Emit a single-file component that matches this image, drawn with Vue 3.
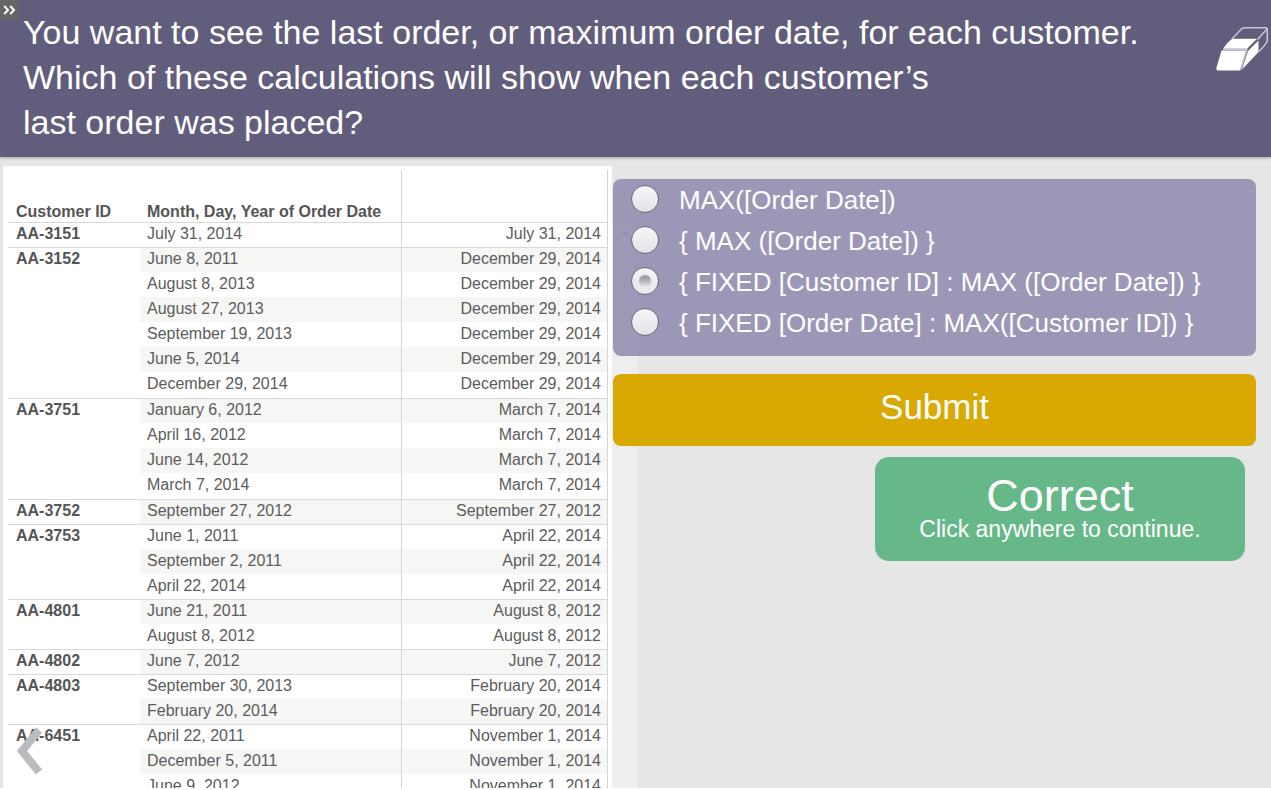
<script setup>
import { ref } from 'vue'

const groups = [
  { id: 'AA-3151', last: 'July 31, 2014', dates: ['July 31, 2014'] },
  {
    id: 'AA-3152',
    last: 'December 29, 2014',
    dates: ['June 8, 2011', 'August 8, 2013', 'August 27, 2013', 'September 19, 2013', 'June 5, 2014', 'December 29, 2014'],
  },
  { id: 'AA-3751', last: 'March 7, 2014', dates: ['January 6, 2012', 'April 16, 2012', 'June 14, 2012', 'March 7, 2014'] },
  { id: 'AA-3752', last: 'September 27, 2012', dates: ['September 27, 2012'] },
  { id: 'AA-3753', last: 'April 22, 2014', dates: ['June 1, 2011', 'September 2, 2011', 'April 22, 2014'] },
  { id: 'AA-4801', last: 'August 8, 2012', dates: ['June 21, 2011', 'August 8, 2012'] },
  { id: 'AA-4802', last: 'June 7, 2012', dates: ['June 7, 2012'] },
  { id: 'AA-4803', last: 'February 20, 2014', dates: ['September 30, 2013', 'February 20, 2014'] },
  { id: 'AA-6451', last: 'November 1, 2014', dates: ['April 22, 2011', 'December 5, 2011', 'June 9, 2012'] },
]

let count = 0
const rows = groups.flatMap((g) =>
  g.dates.map((date, i) => ({
    key: g.id + date,
    id: i === 0 ? g.id : '',
    date,
    last: g.last,
    band: count++ % 2 === 1,
    first: i === 0,
    tall: g.dates.length > 3 && i === g.dates.length - 1,
  }))
)

const options = [
  'MAX([Order Date])',
  '{ MAX ([Order Date]) }',
  '{ FIXED [Customer ID] : MAX ([Order Date]) }',
  '{ FIXED [Order Date] : MAX([Customer ID]) }',
]
const choice = ref(2)
</script>

<template>
  <div class="page">
    <header class="question">
      <button class="menu" type="button" aria-label="Open menu">
        <svg width="13" height="10" viewBox="0 0 13 10">
          <path d="M1.2 1 L5 5 L1.2 9 M7.2 1 L11 5 L7.2 9" />
        </svg>
      </button>
      <h1>
        You want to see the last order, or maximum order date, for each customer.<br />
        Which of these calculations will show when each customer’s<br />
        last order was placed?
      </h1>
      <button class="eraser" type="button" aria-label="Clear answer">
        <svg width="54" height="46" viewBox="0 0 54 46">
          <path class="solid" d="M17 12.800 H42 L32 22.800 H8 Q11.500 17 17 12.800 Z" />
          <path class="solid" d="M6.500 24.500 H31 L25 44.500 H3 Q1 44.500 1.500 41.500 Z" />
          <path class="solid" d="M33 25 L43.500 14.500 V26 L27 43.500 Z" />
          <path class="line" d="M17 13 L26.500 3 Q28 1.700 30 1.700 H50.500 Q52.500 1.700 52.300 4 V15 Q50.500 19 43.500 26 M42.500 13.500 L52 3 M8 23.500 H32 L25.500 44" />
        </svg>
      </button>
    </header>

    <main class="body">
      <section class="sheet">
        <table>
          <colgroup>
            <col class="c-id" />
            <col class="c-date" />
            <col class="c-last" />
          </colgroup>
          <thead>
            <tr>
              <th scope="col">Customer ID</th>
              <th scope="col">Month, Day, Year of Order Date</th>
              <td></td>
            </tr>
          </thead>
          <tbody>
            <tr v-for="r in rows" :key="r.key" :class="{ band: r.band, first: r.first, tall: r.tall }">
              <th scope="row">{{ r.id }}</th>
              <td>{{ r.date }}</td>
              <td>{{ r.last }}</td>
            </tr>
          </tbody>
        </table>
        <button class="back" type="button" aria-label="Previous">
          <svg width="28" height="48" viewBox="0 0 28 48">
            <path d="M23 3 L6 24 L23 45" />
          </svg>
        </button>
      </section>

      <section class="quiz">
        <div class="track"><i class="up"></i><i class="thumb"></i></div>
        <form @submit.prevent>
          <fieldset>
            <label v-for="(o, i) in options" :key="o">
              <input v-model="choice" type="radio" name="calc" :value="i" />
              <span>{{ o }}</span>
            </label>
          </fieldset>
          <button class="submit" type="submit">Submit</button>
        </form>
        <button class="result" type="button">
          <strong>Correct</strong>
          <span>Click anywhere to continue.</span>
        </button>
      </section>
    </main>
  </div>
</template>

<style>
body {
  margin: 0;
  background: #fff;
}
</style>

<style scoped>
.page {
  box-sizing: border-box;
  height: 100vh;
  border-bottom: 2px solid #fff;
  display: flex;
  flex-direction: column;
  overflow: hidden;
  background: #e6e6e6;
  font-family: "Liberation Sans", Arial, sans-serif;
}
button {
  font: inherit;
  border: 0;
  padding: 0;
  cursor: pointer;
}
svg {
  display: block;
  fill: none;
}
.question {
  position: relative;
  flex: none;
  display: flex;
  justify-content: space-between;
  align-items: flex-start;
  padding: 10px 2px 12px 23px;
  background: #615d7c;
  color: #fff;
  box-shadow: 0 1px 3px rgba(0, 0, 0, 0.3);
}
h1 {
  margin: 0;
  font-size: 34px;
  line-height: 45px;
  font-weight: 400;
  white-space: nowrap;
}
.menu {
  position: absolute;
  top: 0;
  left: 0;
  width: 19px;
  height: 20px;
  display: grid;
  place-items: center;
  background: #666;
}
.menu path {
  stroke: #fff;
  stroke-width: 2;
}
.eraser {
  flex: none;
  margin-top: 16px;
  background: none;
}
.eraser .solid {
  fill: #fff;
}
.eraser .line {
  stroke: #c9c7d6;
  stroke-width: 1.5;
}
.body {
  flex: 1;
  min-height: 0;
  display: grid;
  grid-template-columns: minmax(0, 609fr) minmax(0, 659fr);
  padding: 9px 0 0 3px;
}
.sheet {
  position: relative;
  min-height: 0;
  overflow: hidden;
  box-sizing: border-box;
  padding: 4px 4px 0 5px;
  background: #fff;
}
table {
  width: 100%;
  table-layout: fixed;
  border-collapse: separate;
  border-spacing: 0;
  color: #5c5c5c;
  font-size: 16px;
  line-height: 20px;
}
.c-id {
  width: 22%;
}
.c-date {
  width: 43.5%;
}
th,
td {
  box-sizing: border-box;
  height: 25px;
  padding: 0 7px 2px;
  text-align: left;
  white-space: nowrap;
  vertical-align: middle;
}
th {
  color: #555;
}
th:first-child {
  padding-left: 8px;
}
thead th,
thead td {
  height: 52px;
  padding-bottom: 0;
  vertical-align: bottom;
}
td:last-child {
  border-left: 1px solid #d4d4d4;
  border-right: 1px solid #d4d4d4;
  padding-right: 6px;
  text-align: right;
}
.first th,
.first td {
  border-top: 1px solid #d9d9d9;
}
.tall th,
.tall td {
  height: 26px;
}
.band td {
  background: #f6f6f5;
}
.back {
  position: absolute;
  left: 13px;
  bottom: 13px;
  background: none;
}
.back path {
  stroke: #bbbcbf;
  stroke-width: 8;
}
.quiz {
  position: relative;
  padding: 13px 15px 0 1px;
}
.track {
  position: absolute;
  top: 56px;
  bottom: 0;
  left: 0;
  width: 26px;
  background: #eee;
}
.up {
  position: absolute;
  top: 9px;
  left: 9px;
  border: 5px solid transparent;
  border-top: 0;
  border-bottom-color: #333;
}
.thumb {
  position: absolute;
  top: 27px;
  left: 2px;
  width: 22px;
  height: 23px;
  border: 1px solid #bbb;
}
form {
  position: relative;
  display: flex;
  flex-direction: column;
  gap: 18px;
}
fieldset {
  box-sizing: border-box;
  min-width: 0;
  margin: 0;
  border: 0;
  padding: 0 18px 13px;
  border-radius: 8px;
  background: rgba(154, 148, 181, 0.96);
}
label {
  display: flex;
  align-items: center;
  gap: 20px;
  height: 41px;
  color: #fff;
  font-size: 26px;
  line-height: 30px;
  white-space: nowrap;
}
input {
  appearance: none;
  flex: none;
  box-sizing: border-box;
  width: 28px;
  height: 28px;
  margin: 0 0 2px;
  border: 1px solid #6c6880;
  border-radius: 50%;
  background: linear-gradient(#f6f6f7, #e2e3e6);
}
input:checked {
  background:
    linear-gradient(transparent 10px, rgba(234, 234, 236, 0.9) 19px),
    radial-gradient(circle, #a0a0a0 5px, transparent 7px),
    linear-gradient(#f6f6f7, #e2e3e6);
}
.submit {
  height: 72px;
  padding-bottom: 7px;
  border-radius: 8px;
  background: #d9a803;
  color: #fff;
  font-size: 35px;
  line-height: 40px;
}
.result {
  position: relative;
  display: flex;
  flex-direction: column;
  align-items: center;
  width: 370px;
  height: 104px;
  margin: 11px 11px 0 auto;
  padding-top: 17px;
  border-radius: 14px;
  background: #67b889;
  color: #fff;
}
.result strong {
  font-size: 45px;
  line-height: 44px;
  font-weight: 400;
}
.result span {
  font-size: 23px;
  line-height: 22px;
}
</style>
